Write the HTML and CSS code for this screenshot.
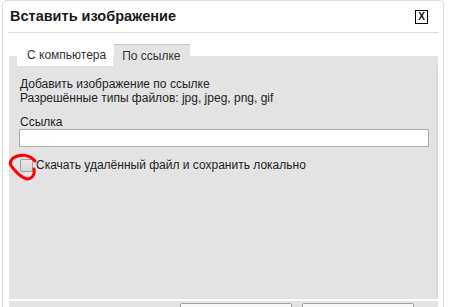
FILE: index.html
```html
<!DOCTYPE html>
<html lang="ru">
<head>
    <meta charset="UTF-8">
    <meta name="viewport" content="width=device-width, initial-scale=1.0">
    <title>Вставить изображение</title>
    <link rel="stylesheet" href="styles.css">
</head>
<body>
    <div class="dialog">
        <div class="dialog-header">
            <span class="dialog-title">Вставить изображение</span>
            <span class="close-btn">X</span>
        </div>

        <div class="tabs">
            <span class="tab">С компьютера</span>
            <span class="tab active">По ссылке</span>
        </div>

        <div class="panel">
            <div class="hint">
                Добавить изображение по ссылке<br>
                Разрешённые типы файлов: jpg, jpeg, png, gif
            </div>
            <div class="form-group">
                <label for="url">Ссылка</label>
                <input type="text" id="url" name="url">
            </div>
            <div class="check-row">
                <input type="checkbox" id="local" name="local">
                <label for="local">Скачать удалённый файл и сохранить локально</label>
                <svg class="mark" width="32" height="32" viewBox="0 0 32 32">
                    <path d="M27 10 C22 4, 12 2, 5 7 C2 10, 1 13, 4 16 C8 21, 13 27, 19 28 C24 28, 27 24, 26 18"
                          fill="none" stroke="#f00" stroke-width="3" stroke-linecap="round"/>
                </svg>
            </div>
        </div>

        <div class="dialog-footer">
            <button type="button" class="btn"></button>
            <button type="button" class="btn"></button>
        </div>
    </div>
</body>
</html>
```

FILE: styles.css
```css
body {
    font-family: 'Liberation Sans', Arial, sans-serif;
    margin: 0;
    background-color: #fff;
    color: #222;
    overflow: hidden;
}
.dialog {
    margin-left: 2px;
    width: 442px;
    box-sizing: border-box;
    border: 1px solid #ddd;
    border-bottom: none;
    border-radius: 5px 5px 0 0;
    padding: 0 5px 0 6px;
    background-color: #fff;
}
.dialog-header {
    display: flex;
    justify-content: space-between;
    align-items: flex-start;
    padding: 5px 2px 6px 2px;
    margin: 0 -1px;
    border-bottom: 1px solid #ddd;
}
.dialog-title {
    font-size: 14.5px;
    font-weight: bold;
    line-height: 20px;
    color: #1a1a1a;
}
.close-btn {
    margin-top: 4px;
    margin-right: 9px;
    width: 11px;
    height: 12px;
    border: 1px solid #000;
    font-size: 10px;
    font-weight: bold;
    line-height: 12px;
    text-align: center;
    color: #111;
}
.tabs {
    display: flex;
    margin-top: 11px;
    padding-left: 8px;
    background: linear-gradient(#fff 12px, #e3e3e3 12px);
}
.tab {
    height: 22px;
    line-height: 22px;
    font-size: 12px;
    padding: 0 7px 0 10px;
    background-color: #fff;
    color: #333;
}
.tab.active {
    margin-left: 1px;
    padding: 0 9px 0 8px;
    height: 21px;
    border-top: 1px solid #c9c9c9;
    background-color: #e3e3e3;
}
.panel {
    height: 233px;
    box-sizing: border-box;
    padding: 11px 9px 0 10px;
    background-color: #e3e3e3;
    box-shadow: inset -2px 0 2px -1px #d2d2d2;
    font-size: 12px;
    color: #222;
}
.hint {
    line-height: 14px;
    padding-left: 1px;
}
.form-group {
    margin-top: 10px;
}
.form-group label {
    display: block;
    line-height: 14px;
    padding-left: 1px;
}
.form-group input[type="text"] {
    display: block;
    width: 100%;
    height: 18px;
    box-sizing: border-box;
    margin: 0;
    border: 1px solid #a9a9a9;
    background-color: #fff;
}
.check-row {
    position: relative;
    display: flex;
    align-items: center;
    margin-top: 11px;
    line-height: 14px;
}
.check-row input[type="checkbox"] {
    appearance: none;
    -webkit-appearance: none;
    width: 13px;
    height: 13px;
    margin: 0 3px 0 1px;
    border: 1px solid #a0a0a0;
    border-radius: 2px;
    background: linear-gradient(#e8e8e8, #d6d6d6);
}
.check-row .mark {
    position: absolute;
    left: -11px;
    top: -7px;
}
.dialog-footer {
    display: flex;
    justify-content: flex-end;
    align-items: flex-start;
    gap: 10px;
    margin-top: 2px;
    padding: 2px 24px 0 0;
    background-color: #e3e3e3;
    height: 7px;
    overflow: hidden;
}
.btn {
    flex: none;
    width: 112px;
    height: 26px;
    border: 1px solid #a0a0a0;
    border-radius: 2px;
    background-color: #f7f7f7;
}
```
